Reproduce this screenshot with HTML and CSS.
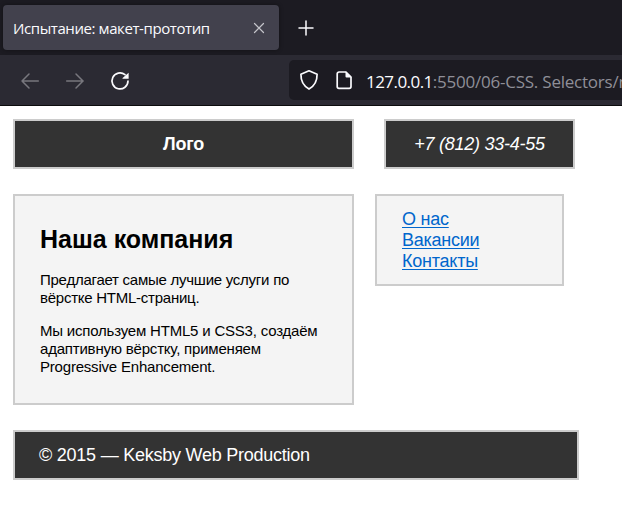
FILE: index.html
```html
<!DOCTYPE html>
<html lang="ru">
<head>
<meta charset="utf-8">
<title>Испытание: макет-прототип</title>
<link rel="stylesheet" href="styles.css">
</head>
<body>
<div class="tabs">
  <div class="tab">
    <span class="tab-title">Испытание: макет-прототип</span>
    <svg class="close" width="12" height="12" viewBox="0 0 12 12"><path d="M1.5 1.5l9 9M10.5 1.5l-9 9"/></svg>
  </div>
  <svg class="plus" width="16" height="16" viewBox="0 0 16 16"><path d="M8 1v14M1 8h14"/></svg>
</div>
<div class="toolbar">
  <div class="controls">
    <svg class="dim" width="20" height="20" viewBox="0 0 20 20"><path d="M18.3 10H2M9 3l-7 7 7 7"/></svg>
    <svg class="dim" width="20" height="20" viewBox="0 0 20 20"><path d="M1.7 10h16.5M11 3l7 7-7 7"/></svg>
    <svg width="20" height="20" viewBox="0 0 20 20"><path d="M18 10a8 8 0 1 1-3-6.3"/><path class="solid" d="M18.6 1.8v6h-5.6c-.5 0-.7-.5-.4-.9z"/></svg>
  </div>
  <div class="address">
    <svg width="20" height="22" viewBox="0 0 20 22"><path d="M10 1.8l8.1 3.5c.1 6.5-1.9 11.3-8.1 14.8C3.8 16.6 1.8 11.8 1.9 5.3z"/></svg>
    <svg width="18" height="20" viewBox="0 0 18 20"><path d="M4 2h7l5 5v9.5a1.8 1.8 0 0 1-1.8 1.8H4a1.8 1.8 0 0 1-1.8-1.8V3.8A1.8 1.8 0 0 1 4 2z"/><path class="solid" d="M10.5 1.5l6 6h-5a1 1 0 0 1-1-1z"/></svg>
    <span class="url"><b>127.0.0.1</b>:5500/06-CSS. Selectors/m</span>
  </div>
</div>
<div class="page">
  <header class="header">
    <div class="box dark logo">Лого</div>
    <div class="box dark phone"><span>+7 (812) 33-4-55</span></div>
  </header>
  <div class="columns">
    <main class="box content">
      <h1>Наша компания</h1>
      <p>Предлагает самые лучшие услуги по<br>вёрстке HTML-страниц.</p>
      <p>Мы используем HTML5 и CSS3, создаём<br>адаптивную вёрстку, применяем<br>Progressive Enhancement.</p>
    </main>
    <nav class="box menu">
      <a>О нас</a>
      <a>Вакансии</a>
      <a>Контакты</a>
    </nav>
  </div>
  <footer class="box dark footer">© 2015 — Keksby Web Production</footer>
</div>
</body>
</html>
```
FILE: styles.css
```css
* { box-sizing: border-box; }
body {
  margin: 0;
  height: 511px;
  overflow: hidden;
  background: #fff;
  font: 18px/21px "Liberation Sans", Arial, sans-serif;
  letter-spacing: -.24px;
}
svg { display: block; flex: none; fill: none; stroke: #fbfbfe; stroke-width: 1.7; stroke-linecap: round; stroke-linejoin: round; }
.solid { fill: #fbfbfe; stroke: none; }
.tabs { display: flex; align-items: center; height: 55px; padding-left: 3px; background: #1c1b22; }
.tab {
  display: flex;
  align-items: center;
  justify-content: space-between;
  width: 276px;
  height: 45px;
  padding: 0 14px 0 10px;
  border-radius: 4px;
  background: #42414d;
  box-shadow: 0 0 4px rgba(0, 0, 0, .4);
  color: #fbfbfe;
}
.tab-title { font: 15px/20px "Open Sans", "Noto Sans", sans-serif; white-space: nowrap; letter-spacing: -.41px; }
.close { stroke: #c4c4ca; stroke-width: 1.2; }
.plus { margin-left: 18.5px; stroke-width: 1.5; }
.toolbar { display: flex; height: 51px; background: #2b2a33; border-bottom: 1px solid #0c0c0d; }
.controls { display: flex; align-items: center; gap: 25px; width: 289px; flex: none; padding-left: 20px; padding-top: 2px; }
.dim { stroke: #78777e; stroke-width: 1.5; }
.address { display: flex; align-items: center; flex: 1; min-width: 0; height: 40px; margin-top: 5px; padding-left: 10px; border-radius: 5px 0 0 5px; background: #1c1b22; overflow: hidden; }
.address svg + svg { margin-left: 16px; }
.url { margin: 4px 0 0 13px; color: #8f8f98; font: 17px/24px "Open Sans", "Noto Sans", sans-serif; white-space: nowrap; letter-spacing: -.23px; }
.url b { color: #fbfbfe; font-weight: 400; letter-spacing: -.55px; }
.page { padding: 13px 0 0 13px; }
.box { border: 2px solid #ccc; background: #f4f4f4; }
.dark { height: 50px; background: #333; color: #fff; line-height: 46px; }
.header { display: flex; gap: 30px; }
.logo { width: 341px; text-align: center; font-weight: 700; }
.phone { width: 191px; text-align: center; font-style: italic; }
.columns { display: flex; align-items: flex-start; gap: 21px; margin: 25px 0; }
.content { width: 341px; height: 211px; padding: 28px 25px 0; color: #000; white-space: nowrap; }
h1 { margin: 0 0 16px; font-size: 25px; line-height: 31px; letter-spacing: 0; }
p { margin: 0 0 15px; font-size: 15px; line-height: 18px; letter-spacing: -.2px; }
p:first-of-type { letter-spacing: -.25px; }
.menu { display: flex; flex-direction: column; align-items: flex-start; width: 189px; height: 92px; padding: 13px 25px 0; }
.menu a { color: #0066cc; text-decoration: underline; text-decoration-thickness: 1px; text-underline-offset: 2px; text-decoration-skip-ink: none; }
.footer { width: 566px; padding-left: 24px; }
```
